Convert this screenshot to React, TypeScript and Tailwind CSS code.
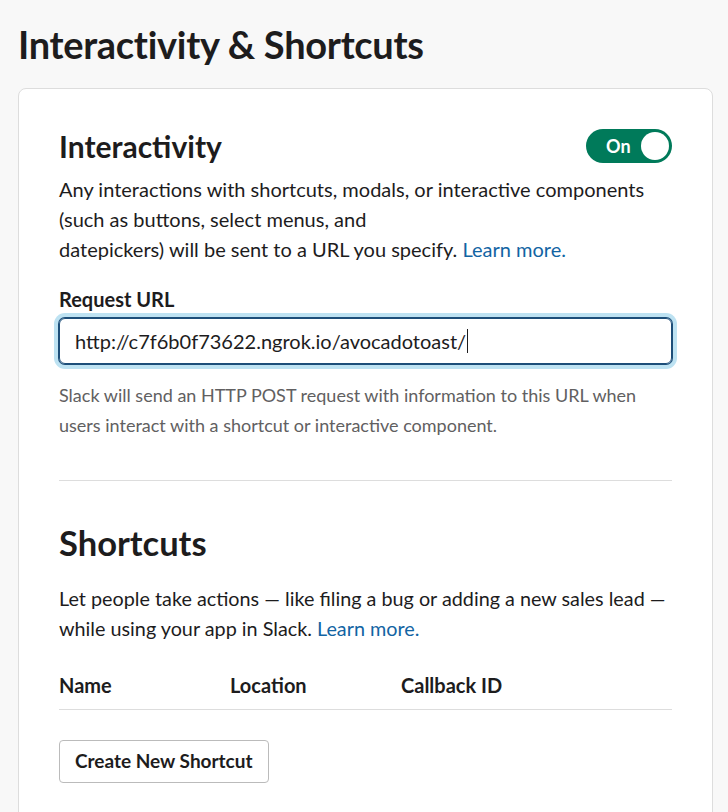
import React from "react";

export default function App() {
  return (
    <div className="min-h-[812px] bg-[#f8f8f8] text-[#1d1c1d]" style={{ fontFamily: "Lato, 'Noto Sans', sans-serif" }}>
      <div className="pl-[18px] pt-[22px]">
        <h1 className="text-[38px] font-bold leading-[44px] tracking-[-0.3px]">Interactivity &amp; Shortcuts</h1>
        <div className="mt-[22px] w-[695px] rounded-lg border border-[#dddddd] bg-white px-10 pt-10 pb-10">
          <div className="flex items-center justify-between">
            <h2 className="text-[30px] font-bold leading-[34px]">Interactivity</h2>
            <div className="flex h-[34px] w-[86px] items-center justify-between rounded-full bg-[#007a5a] pl-[20px] pr-[3px]">
              <span className="text-[18px] font-bold text-white">On</span>
              <span className="h-[28px] w-[28px] rounded-full bg-white" />
            </div>
          </div>
          <p className="mt-[11px] text-[20px] leading-[30px]">
            Any interactions with shortcuts, modals, or interactive components
            <br />
            (such as buttons, select menus, and
            <br />
            datepickers) will be sent to a URL you specify.{" "}
            <a className="text-[#1264a3]">Learn more.</a>
          </p>
          <div className="mt-[23px] text-[20px] font-bold leading-[24px]">Request URL</div>
          <div className="mt-[7px] flex h-[46px] items-center rounded-md border border-[#1d4e79] px-[15px] shadow-[0_0_0_1px_#1d4e79,0_0_0_5px_#bde2f2]">
            <span className="text-[20px]">http://c7f6b0f73622.ngrok.io/avocadotoast/</span>
            <span className="ml-[1px] h-[24px] w-[1px] bg-[#1d1c1d]" />
          </div>
          <p className="mt-[16px] text-[18px] leading-[30px] text-[#616061]">
            Slack will send an HTTP POST request with information to this URL when
            <br />
            users interact with a shortcut or interactive component.
          </p>
          <div className="mt-[40px] h-px bg-[#dddddd]" />
          <h2 className="mt-[40px] text-[34.5px] font-bold leading-[44px]">Shortcuts</h2>
          <p className="mt-[18px] whitespace-nowrap text-[19.8px] leading-[30px]">
            Let people take actions — like filing a bug or adding a new sales lead —
            <br />
            while using your app in Slack. <a className="text-[#1264a3]">Learn more.</a>
          </p>
          <div className="mt-[30px] flex border-b border-[#dddddd] pb-[12px] text-[20px] font-bold leading-[24px]">
            <div className="w-[171px]">Name</div>
            <div className="w-[171px]">Location</div>
            <div>Callback ID</div>
          </div>
          <button className="mt-[30px] h-[43px] rounded-[4px] border border-[#bbbbbb] bg-white px-[15px] text-[19px] font-bold">
            Create New Shortcut
          </button>
        </div>
      </div>
    </div>
  );
}
